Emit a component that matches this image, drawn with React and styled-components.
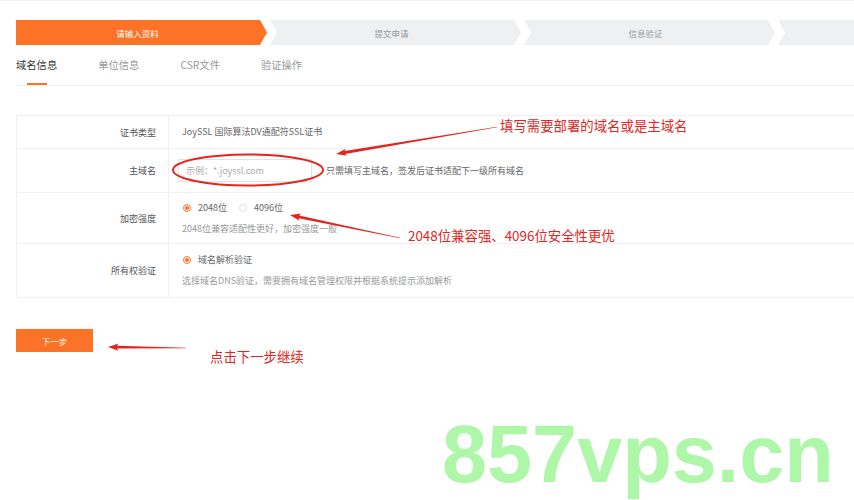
import React from "react";
import styled, { createGlobalStyle } from "styled-components";

const GlobalStyle = createGlobalStyle`
  html, body {
    margin: 0;
    padding: 0;
    background: #fff;
  }
  body {
    font-family: "Noto Sans CJK SC", "Noto Sans", sans-serif;
    color: #666;
    overflow: hidden;
  }
`;

const ORANGE = "#fc7227";
const RED = "#e2261e";

const Page = styled.div`
  position: relative;
  width: 854px;
  height: 500px;
  box-sizing: border-box;
  border-top: 1px solid #f2f2f2;
  padding: 19px 0 0 16px;
  overflow: hidden;
`;

const Steps = styled.div`
  display: flex;
  gap: 3px;
  height: 25px;
`;

const Step = styled.div`
  flex: 0 0 251px;
  box-sizing: border-box;
  display: flex;
  align-items: center;
  justify-content: center;
  padding-right: 8px;
  font-size: 8.5px;
  color: ${({ active }) => (active ? "#fff" : "#999")};
  background: ${({ active }) => (active ? ORANGE : "#eff0f2")};
  clip-path: ${({ first }) =>
    first
      ? "polygon(0 0, calc(100% - 7px) 0, 100% 50%, calc(100% - 7px) 100%, 0 100%)"
      : "polygon(0 0, calc(100% - 7px) 0, 100% 50%, calc(100% - 7px) 100%, 0 100%, 7px 50%)"};
`;

const Tabs = styled.div`
  display: flex;
  gap: 41px;
  margin-top: 11px;
  border-bottom: 1px solid #eeeeee;
`;

const Tab = styled.div`
  position: relative;
  font-size: 10.3px;
  line-height: 18px;
  padding-bottom: 11px;
  color: ${({ active }) => (active ? "#333" : "#999")};

  &::after {
    content: "";
    display: ${({ active }) => (active ? "block" : "none")};
    position: absolute;
    left: 50%;
    bottom: 0;
    width: 20px;
    height: 2px;
    margin-left: -10px;
    background: ${ORANGE};
  }
`;

const Table = styled.div`
  margin-top: 29px;
  border-top: 1px solid #f0f0f0;
  border-left: 1px solid #f0f0f0;
`;

const Row = styled.div`
  display: grid;
  grid-template-columns: 152px 1fr;
  height: ${({ h }) => h}px;
  border-bottom: 1px solid #f0f0f0;
  box-sizing: border-box;
`;

const Label = styled.div`
  display: flex;
  align-items: center;
  justify-content: flex-end;
  padding-right: 12px;
  border-right: 1px solid #f0f0f0;
  font-size: 9px;
  color: #555;
`;

const Cell = styled.div`
  display: flex;
  flex-direction: column;
  justify-content: center;
  gap: 5px;
  padding-left: 13px;
  font-size: 9px;
  color: #666;
`;

const Line = styled.div`
  display: flex;
  align-items: center;
  line-height: 16px;
`;

const Input = styled.div`
  width: 134px;
  height: 23px;
  box-sizing: border-box;
  border: 1px solid #e2e2e2;
  margin-left: -4px;
  padding-left: 7px;
  display: flex;
  align-items: center;
  font-size: 9px;
  color: #aaa;
`;

const Hint = styled.span`
  font-size: 9px;
  color: ${({ dark }) => (dark ? "#666" : "#999")};
  margin-left: ${({ gap }) => gap || 0}px;
`;

const Radio = styled.span`
  width: 8px;
  height: 8px;
  border-radius: 50%;
  box-sizing: border-box;
  border: 1px solid ${({ checked }) => (checked ? ORANGE : "#ddd")};
  margin: 0 7px 0 ${({ offset }) => offset || 0}px;
  display: inline-flex;
  align-items: center;
  justify-content: center;

  &::after {
    content: "";
    width: 4px;
    height: 4px;
    border-radius: 50%;
    background: ${({ checked }) => (checked ? ORANGE : "transparent")};
  }
`;

const Button = styled.div`
  margin-top: 31px;
  width: 77px;
  height: 23px;
  background: ${ORANGE};
  color: #fff;
  font-size: 8.5px;
  display: flex;
  align-items: center;
  justify-content: center;
`;

const Note = styled.div`
  position: absolute;
  left: ${({ x }) => x}px;
  top: ${({ y }) => y}px;
  font-size: 13.4px;
  color: ${RED};
  white-space: nowrap;
  line-height: 18px;
`;

const Overlay = styled.svg`
  position: absolute;
  left: 0;
  top: 0;
  pointer-events: none;
`;

const Watermark = styled.div`
  position: absolute;
  left: 442px;
  top: 413px;
  font-family: "Liberation Sans", Arial, sans-serif;
  font-weight: bold;
  font-size: 81px;
  line-height: 81px;
  letter-spacing: 0;
  color: #aef7a8;
  white-space: nowrap;
`;

function arrowPoints(x1, y1, x2, y2) {
  const dx = x2 - x1;
  const dy = y2 - y1;
  const len = Math.hypot(dx, dy);
  const ux = dx / len;
  const uy = dy / len;
  const nx = -uy;
  const ny = ux;
  const head = 9;
  const bx = x2 - ux * head;
  const by = y2 - uy * head;
  const tail = 0.3;
  const neck = 1.4;
  const wing = 3.6;
  const pts = [
    [x1 + nx * tail, y1 + ny * tail],
    [bx + nx * neck, by + ny * neck],
    [bx + nx * wing - ux * 1.5, by + ny * wing - uy * 1.5],
    [x2, y2],
    [bx - nx * wing - ux * 1.5, by - ny * wing - uy * 1.5],
    [bx - nx * neck, by - ny * neck],
    [x1 - nx * tail, y1 - ny * tail],
  ];
  return pts.map((p) => p.map((v) => v.toFixed(1)).join(",")).join(" ");
}

const arrows = [
  [497, 126, 336, 153],
  [400, 237, 290, 214],
  [186, 347, 108, 346],
];

export default function App() {
  return (
    <>
      <GlobalStyle />
      <Page>
        <Steps>
          <Step first active>请输入资料</Step>
          <Step>提交申请</Step>
          <Step>信息验证</Step>
          <Step />
        </Steps>

        <Tabs>
          <Tab active>域名信息</Tab>
          <Tab>单位信息</Tab>
          <Tab>CSR文件</Tab>
          <Tab>验证操作</Tab>
        </Tabs>

        <Table>
          <Row h={33}>
            <Label>证书类型</Label>
            <Cell>
              <Line>JoySSL 国际算法DV通配符SSL证书</Line>
            </Cell>
          </Row>
          <Row h={44}>
            <Label>主域名</Label>
            <Cell>
              <Line>
                <Input>示例：*.joyssl.com</Input>
                <Hint dark gap={14}>只需填写主域名，签发后证书适配下一级所有域名</Hint>
              </Line>
            </Cell>
          </Row>
          <Row h={51}>
            <Label>加密强度</Label>
            <Cell>
              <Line>
                <Radio checked offset={1} />
                2048位
                <Radio offset={12} />
                4096位
              </Line>
              <Line>
                <Hint>2048位兼容适配性更好，加密强度一般</Hint>
              </Line>
            </Cell>
          </Row>
          <Row h={54}>
            <Label>所有权验证</Label>
            <Cell>
              <Line>
                <Radio checked offset={1} />
                域名解析验证
              </Line>
              <Line>
                <Hint>选择域名DNS验证，需要拥有域名管理权限并根据系统提示添加解析</Hint>
              </Line>
            </Cell>
          </Row>
        </Table>

        <Button>下一步</Button>

        <Overlay width="854" height="500" viewBox="0 0 854 500">
          <ellipse cx="248" cy="169" rx="75" ry="15.5" fill="none" stroke={RED} strokeWidth="2" />
          {arrows.map((a, i) => (
            <polygon key={i} points={arrowPoints(...a)} fill={RED} />
          ))}
        </Overlay>

        <Note x={500} y={115}>填写需要部署的域名或是主域名</Note>
        <Note x={408} y={225}>2048位兼容强、4096位安全性更优</Note>
        <Note x={210} y={346}>点击下一步继续</Note>

        <Watermark>857vps.cn</Watermark>
      </Page>
    </>
  );
}
